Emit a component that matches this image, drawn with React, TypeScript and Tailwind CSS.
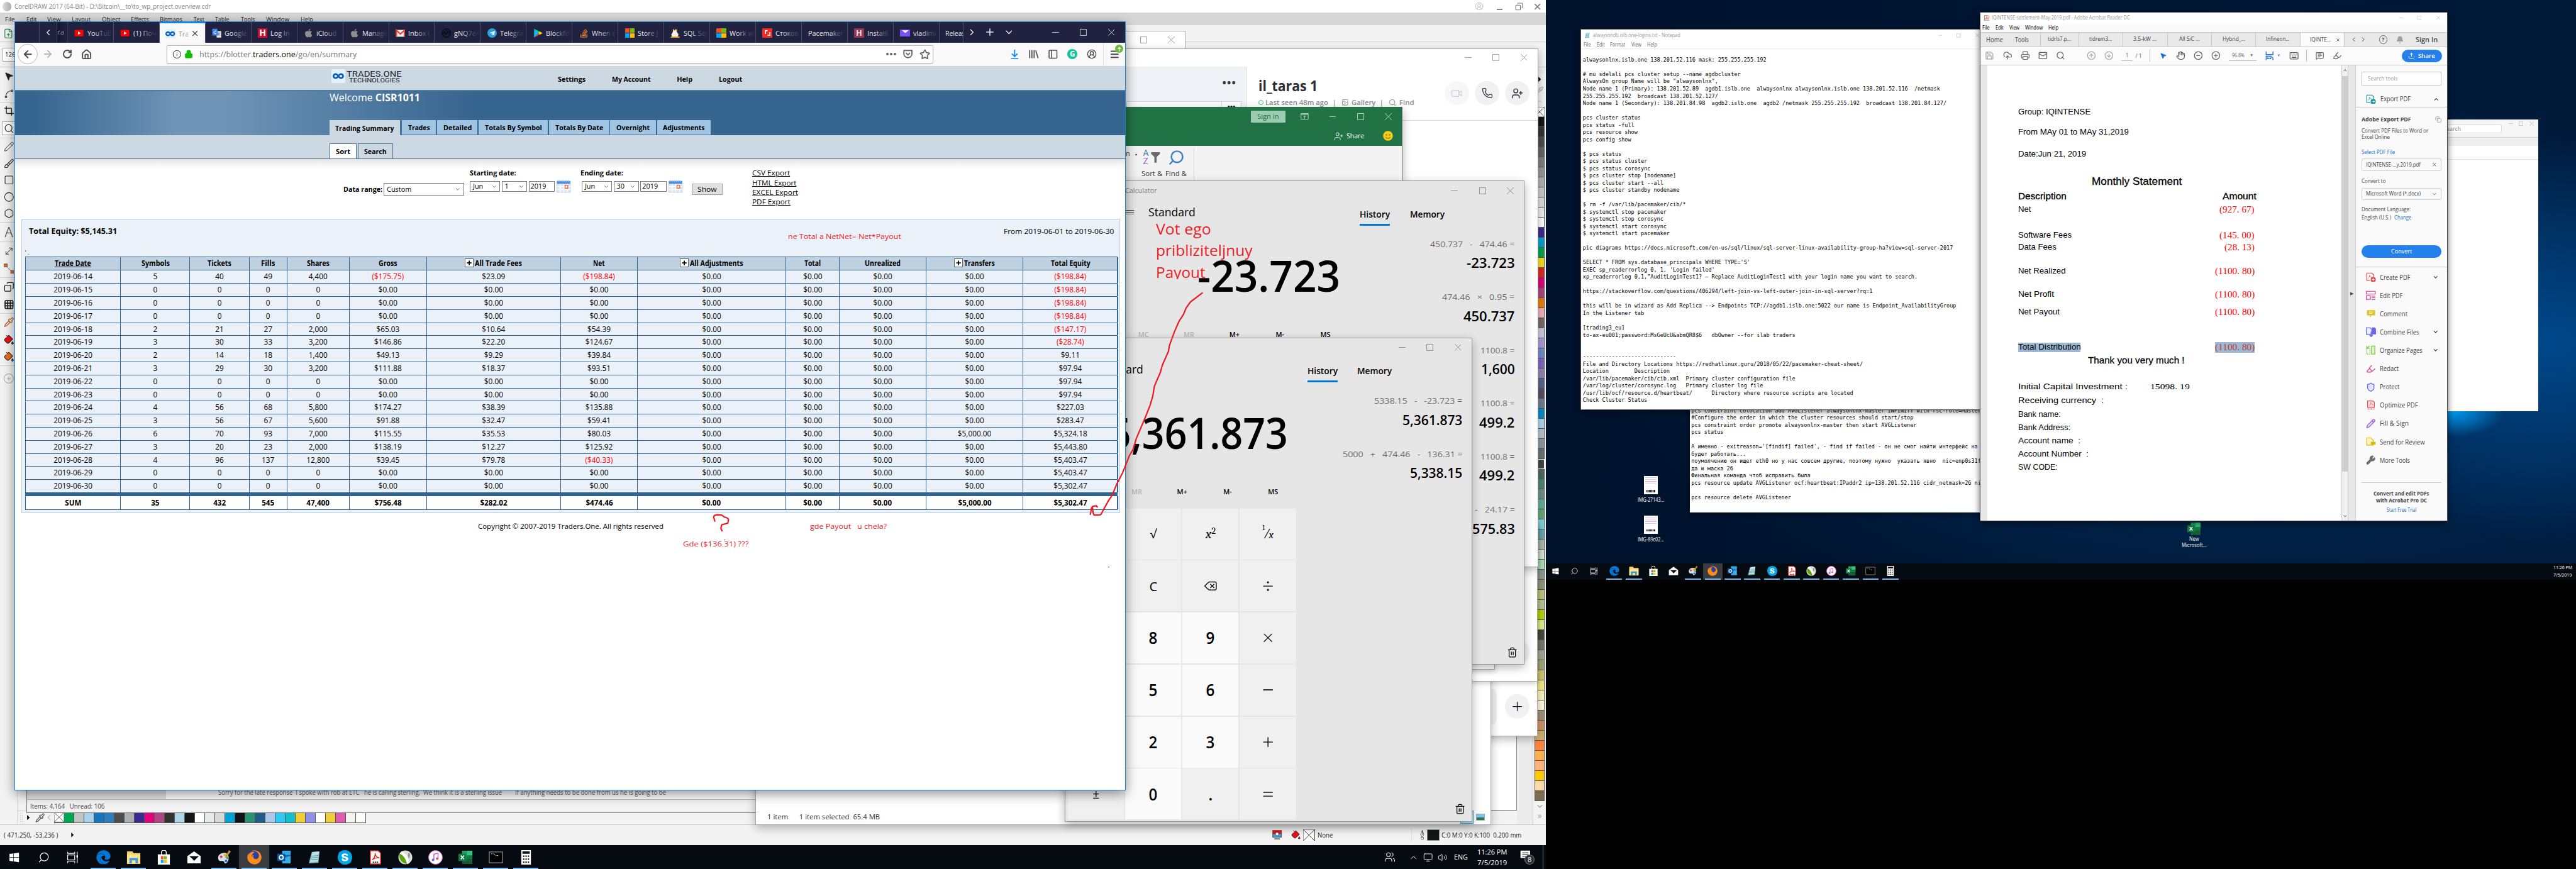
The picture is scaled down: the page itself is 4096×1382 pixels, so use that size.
import React, { useLayoutEffect, useRef } from 'react';
import {
  ArrowLeft, ArrowRight, RotateCw, House, Lock, Info, Star, Trash2, Delete, Users, Volume2, Monitor, ChevronUp, ChevronDown,
  ChevronLeft, ChevronRight, Plus, Minus, X, Equal, Divide, Menu, Printer, Mail, CloudUpload, Save, Search, CircleArrowUp,
  CircleArrowDown, Hand, MousePointer2, CircleMinus, CirclePlus, Bell, Highlighter, Keyboard, Upload, Phone, Video, UserPlus,
  Shield, Wrench, Image as ImageIcon, MessageSquareText, Spline, Crop, Brush, Pencil, Square, Circle, Hexagon, MoveDiagonal2,
  Copy, Grid3x3, Pipette, PaintBucket, FilePlus, PanelLeft, CircleUserRound,
} from 'lucide-react';
import {
  FaApple, FaWindows, FaStackOverflow, FaEdge, FaSkype, FaTelegramPlane, FaInfinity, FaFirefox, FaSmile,
} from 'react-icons/fa';

/* Single-line text stretched or condensed to the width set on its box. */
function F({ c = '', u = false, children }: { c?: string; u?: boolean; children: React.ReactNode }) {
  const outer = useRef<HTMLSpanElement>(null);
  const inner = useRef<HTMLSpanElement>(null);
  useLayoutEffect(() => {
    const o = outer.current, n = inner.current;
    if (!o || !n) return;
    n.style.transform = 'none';
    const a = o.getBoundingClientRect().width, b = n.getBoundingClientRect().width;
    if (a && b) n.style.transform = `scaleX(${a / b})`;
  });
  return (
    <span ref={outer} className={'inline-block shrink-0 whitespace-pre ' + c}>
      <span ref={inner} className={'inline-block origin-left ' + (u ? 'underline underline-offset-2' : '')}>{children}</span>
    </span>
  );
}

function Controls({ c = '', slot = 'w-[69px]', g = 'size-[17px]' }: { c?: string; slot?: string; g?: string }) {
  const s = 'flex shrink-0 items-center justify-center ' + slot;
  return (
    <div className={'flex shrink-0 items-center ' + c}>
      <span className={s}><svg viewBox="0 0 16 16" className={g}><path d="M0 8h16" stroke="currentColor" strokeWidth="1.2" /></svg></span>
      <span className={s}><svg viewBox="0 0 16 16" className={g}><path d="M.7.7h14.6v14.6H.7z" fill="none" stroke="currentColor" strokeWidth="1.2" /></svg></span>
      <span className={s}><svg viewBox="0 0 16 16" className={g}><path d="M0 0l16 16M16 0L0 16" stroke="currentColor" strokeWidth="1.2" /></svg></span>
    </div>
  );
}

/* ---------- CorelDRAW ---------- */

const MENU: [string, string][] = [
  ['File', 'w-[24px] ml-[13px]'], ['Edit', 'w-[26px] ml-[28px]'], ['View', 'w-[34px] ml-[27px]'], ['Layout', 'w-[47px] ml-[27px]'],
  ['Object', 'w-[46px] ml-[27px]'], ['Effects', 'w-[45px] ml-[26px]'], ['Bitmaps', 'w-[56px] ml-[27px]'], ['Text', 'w-[26px] ml-[28px]'],
  ['Table', 'w-[35px] ml-[28px]'], ['Tools', 'w-[35px] ml-[29px]'], ['Window', 'w-[58px] ml-[28px]'], ['Help', 'w-[31px] ml-[28px]'],
];

const COLS = [
  '#151717', '#333333', '#4d4d4d', '#666666', '#808080', '#999999', '#b3b3b3', '#cccccc', '#dedede', '#efefef', '#ffffff',
  '#3b2a91', '#00a3d9', '#00a651', '#f9e11e', '#e02b20', '#e6007e', '#ad4785', '#ef7f00', '#f7b2b9', '#7d6b67', '#cfcbea',
  '#ac9ddc', '#6f8fd0', '#8368c8', '#9488b4', '#536796', '#5a5068', '#6f7f99', '#0091cd', '#b0d9ef', '#b8c7d3', '#8e9ca5',
  '#6b767b', '#404847', '#4f6b68', '#4c8878', '#70918d', '#61b09c', '#65a977', '#7fd9e4', '#67b2be', '#b6c9b9', '#dff6e2',
  '#b4f0bd', '#929e97', '#919a7b', '#c2c97a', '#b9c896', '#b8d700', '#e7ef88', '#4a4a40', '#787a6f', '#a8a894', '#a6a678',
  '#d2c76e', '#fbe985', '#fdf3b9', '#fefadd', '#a38d77', '#d09263', '#d2b06c', '#ff823f', '#fdad4b', '#ffb27a', '#fdc800',
  '#fdd8a7', '#7d6c54',
];
const ROW = [
  '#00a651', '#c1c5c3', '#a9d3ea', '#1576bd', '#2f7dbf', '#4d4d4d', '#adaeb0', '#3b2a91', '#e3007f', '#ad4785', '#333331',
  '#afd5e8', '#151717', '#ffffff', '#e8e9e9', '#d7dad8', '#00a3d5', '#101416', '#2c9274', '#215b88', '#abc7e9', '#2fc9f2',
  '#14bfca', '#efcf38', '#9190ea', '#ffffff', '#efcf38', '#dd5eb2', '#f4f5f1', '#fcfcfa',
];

const NoFill = ({ c }: { c: string }) => (
  <svg viewBox="0 0 24 24" preserveAspectRatio="none" className={'shrink-0 bg-white ' + c}>
    <path d="M0 0h24v24H0zM0 0l24 24M24 0L0 24" fill="none" stroke="#333" strokeWidth="1.2" />
  </svg>
);

function Corel() {
  const ic = 'size-[26px]';
  const grp = 'flex w-[44px] flex-col items-center justify-around border-b border-[#cfcfcf]';
  return (
    <div className="absolute left-0 top-0 flex h-[2100px] w-[3840px] flex-col bg-[#f3f3f3] text-[#222]">
      <div className="flex h-[32px] shrink-0 items-center bg-white pl-[6px] text-[16px] text-[#858585]">
        <span className="h-[24px] w-[22px] rounded-full bg-linear-to-r from-[#ddd] to-[#aaa]" />
        <F c="ml-[8px] w-[488px]">CorelDRAW 2017 (64-Bit) - D:\Bitcoin\__to\to_wp_project.overview.cdr</F>
        <div className="ml-auto flex items-center text-[#777]">
          <CircleUserRound className="mr-[32px] size-[22px] text-[#bbb]" strokeWidth={1.5} />
          <span className="mr-[31px] mt-[14px] h-[3px] w-[15px] bg-[#888]" />
          <Copy className="mr-[24px] size-[20px] -scale-x-100" strokeWidth={2} />
          <X className="mr-[8px] size-[24px]" strokeWidth={2.5} />
        </div>
      </div>
      <div className="flex h-[30px] shrink-0 items-center bg-[#d7d7d7] pt-[2px] text-[15px]">
        {MENU.map(([t, w]) => <F key={t} c={w}>{t}</F>)}
      </div>
      <div className="flex h-[43px] shrink-0 items-center border-b border-[#cfcfcf] pl-[8px]"><FilePlus className={ic} strokeWidth={1.6} color="#168a3a" /></div>
      <div className="flex h-[63px] shrink-0 items-center border-b border-[#cfcfcf] pl-[6px]">
        <span className="flex h-[34px] w-[80px] items-center border border-[#aaa] bg-white pl-[5px] text-[15px]">126</span>
      </div>
      <div className="flex min-h-0 flex-1">
        <div className="flex w-[44px] shrink-0 flex-col border-r border-[#d5d5d5]">
          <div className={grp + ' h-[88px]'}><MousePointer2 className={ic} fill="#222" strokeWidth={1} /><Spline className={ic} strokeWidth={1.5} /></div>
          <div className={grp + ' h-[88px]'}><Crop className={ic} /><span className="flex h-[34px] w-[34px] items-center justify-center border border-[#aaa] bg-white"><Search className={ic} strokeWidth={1.6} /></span></div>
          <div className={grp + ' h-[209px]'}><Pencil className={ic} strokeWidth={1.3} /><Brush className={ic} strokeWidth={1.5} /><Square className={ic} strokeWidth={1.5} /><Circle className={ic} strokeWidth={1.5} /><Hexagon className={ic} strokeWidth={1.5} /></div>
          <div className={grp + ' h-[49px] text-[34px] font-light'}>A</div>
          <div className={grp + ' h-[89px]'}><MoveDiagonal2 className={ic + ' -scale-x-100'} strokeWidth={1.4} /><svg viewBox="0 0 24 24" className={ic}><path d="M4 4l16 16" stroke="#333" /><path d="M1 1h7v7H1zM16 16h7v7h-7z" fill="#ee6c1a" stroke="#333" /></svg></div>
          <div className={grp + ' h-[89px]'}><Copy className={ic + ' -scale-x-100'} strokeWidth={1.8} /><Grid3x3 className={ic} strokeWidth={2.5} /></div>
          <div className={grp + ' h-[129px]'}><Pipette className={ic} color="#c2571a" strokeWidth={1.8} /><PaintBucket className={ic} fill="#e11" strokeWidth={1.5} /><PaintBucket className={ic} fill="#ee6c1a" strokeWidth={1.5} /></div>
          <div className="flex h-[64px] items-center justify-center text-[#aaa]"><CirclePlus className="size-[28px]" strokeWidth={1.4} /></div>
        </div>
        <div className="flex flex-1 flex-col">
          <div className="ml-[30px] flex-1 border-r border-b border-[#888] bg-white" />
          <div className="flex h-[34px] shrink-0 items-center border-t border-[#cfcfcf] pl-[4px] text-black">
            <svg viewBox="0 0 10 24" className="h-[24px] w-[10px]"><path d="M2 0v24M7 0v24" stroke="#999" strokeDasharray="2 3" /></svg>
            <svg viewBox="0 0 8 16" className="ml-[10px] h-[13px] w-[7px]"><path d="M0 0l8 8-8 8z" /></svg>
            <Pipette className="ml-[12px] size-[24px]" strokeWidth={2} color="#555" />
            <ChevronLeft className="size-[22px] text-[#bbb]" />
            <span className="ml-[2px] flex border-b-2 border-[#555]">
              <NoFill c="h-[24px] w-[25px]" />
              {ROW.map((k, i) => <span key={i} className="h-[24px] w-[25px] border-r border-[#555]" style={{ backgroundColor: k }} />)}
            </span>
          </div>
        </div>
        <div className="w-[42px] shrink-0 border-r border-[#ccc] bg-[#ebebeb]" />
        <div className="flex w-[30px] shrink-0 flex-col items-center bg-[#f3f3f3]">
          <div className="flex h-[97px] flex-col items-center justify-around text-[#aaa]">
            <svg viewBox="0 0 24 8" className="h-[8px] w-[24px]"><path d="M4 1h20M2 6h20" stroke="#999" strokeDasharray="2 4" /></svg>
            <svg viewBox="0 0 8 16" className="h-[13px] w-[7px]"><path d="M0 0l8 8-8 8z" /></svg>
            <Pipette className="size-[20px]" /><ChevronUp className="size-[16px]" />
          </div>
          <NoFill c="h-[25px] w-[25px]" />
          {COLS.map((k, i) => (
            <span key={i} className={'h-[25px] w-[25px] shrink-0 border-b ' + (i === 34 ? 'border-2 border-white' : 'border-x border-[#555]')} style={{ backgroundColor: k }} />
          ))}
          <ChevronDown className="mt-[4px] size-[20px] text-[#aaa]" strokeWidth={3} />
          <span className="mt-[2px] text-[22px] text-[#aaa]">»</span>
        </div>
      </div>
      <div className="flex h-[52px] shrink-0 items-center border-t border-[#ccc] text-[16px]">
        <F c="ml-[9px] w-[135px]">( 471.250, -53.236 )</F>
        <svg viewBox="0 0 8 16" className="ml-[33px] h-[12px] w-[7px]"><path d="M0 0l8 8-8 8z" /></svg>
        <svg viewBox="0 0 24 24" className="ml-auto size-[24px]"><path d="M1 1h22v17H1z" fill="#e11" stroke="#333" /><path d="M2 10h20v7H2z" fill="#1ab0ee" /><circle cx="12" cy="10" r="4" fill="#fff" stroke="#333" /><path d="M5 22h14" stroke="#333" strokeWidth="2" /></svg>
        <PaintBucket className="ml-[23px] size-[24px]" fill="#e11" strokeWidth={1.5} />
        <NoFill c="ml-[6px] size-[29px]" />
        <F c="ml-[7px] w-[38px]">None</F>
        <span className="ml-[194px] h-[34px] w-px bg-[#ddd]" />
        <svg viewBox="0 0 12 24" className="ml-[20px] h-[24px] w-[14px]"><path d="M6 1l4 10-3 6H5l-3-6zM6 1v11M3 18h6v5H3z" fill="none" stroke="#222" /></svg>
        <span className="ml-[5px] h-[29px] w-[30px] border border-[#888] bg-[#151717]" />
        <F c="ml-[6px] mr-[59px] w-[199px]">C:0 M:0 Y:0 K:100  0.200 mm</F>
      </div>
    </div>
  );
}

/* ---------- Calculator ---------- */

type Entry = [string, string, string, string];
const key = 'flex items-center justify-center bg-[#f0f0f0]';
const num = 'flex items-center justify-center bg-[#fafafa] text-[41px] font-semibold';
const Digit = ({ d }: { d: string }) => <span className={num}><span className="scale-x-92">{d}</span></span>;

function Calculator({ pos, value, valueW, entries, keypad }: { pos: string; value: string; valueW: string; entries: Entry[]; keypad: boolean }) {
  const op = 'size-[38px]';
  return (
    <div className={'absolute flex h-[1203px] w-[1012px] flex-col border border-[#9a9a9a] bg-[#e6e6e6] text-black shadow-[0_8px_22px_rgba(0,0,0,0.3)] ' + pos}>
      <div className="flex h-[46px] shrink-0 items-center pl-[17px] text-[18px] text-[#7a7a7a]">
        <F c="w-[79px]">Calculator</F>
        <Controls c="ml-auto" />
      </div>
      <div className="flex min-h-0 flex-1">
        <div className="flex w-[572px] shrink-0 flex-col">
          <div className="flex h-[64px] shrink-0 items-center pb-[2px] pl-[20px]">
            <svg viewBox="0 0 20 12" className="h-[12px] w-[21px]"><path d="M0 1h20M0 6h20M0 11h20" stroke="#000" strokeWidth="1.3" /></svg>
            <F c="ml-[35px] w-[117px] text-[27px]">Standard</F>
          </div>
          <div className="flex h-[255px] shrink-0 items-center justify-end pb-[6px] pr-[20px] text-[107px] font-semibold">
            <F c={valueW}>{value}</F>
          </div>
          <div className="flex h-[34px] shrink-0 items-center pl-[7px] text-[17px] font-semibold">
            {['MC', 'MR', 'M+', 'M-', 'MS'].map((m, i) => (
              <span key={m} className={'w-[113px] text-center ' + (i < 2 ? 'text-[#b5b5b5]' : '')}>{m}</span>
            ))}
          </div>
          {keypad && (
            <div className="ml-[6px] mt-[24px] grid h-[773px] w-[566px] grid-cols-4 grid-rows-6 gap-[3px] text-[30px]">
              <span className={key} />
              <span className={key}>√</span>
              <span className={key + ' font-serif text-[34px] italic'}><span>x<sup className="text-[22px] not-italic">2</sup></span></span>
              <span className={key + ' font-serif italic'}><span className="flex items-center"><sup className="mb-[10px] text-[18px] not-italic">1</sup><span className="-ml-[2px]">/</span><span className="-ml-[2px] mt-[8px] text-[26px]">x</span></span></span>
              <span className={key} />
              <span className={key + ' text-[32px]'}>C</span>
              <span className={key}><Delete className="size-[34px]" strokeWidth={1.5} /></span>
              <span className={key}><Divide className={op} strokeWidth={1.2} /></span>
              <span className={num} /><Digit d="8" /><Digit d="9" /><span className={key}><X className={op} strokeWidth={1.2} /></span>
              <span className={num} /><Digit d="5" /><Digit d="6" /><span className={key}><Minus className={op} strokeWidth={1.6} /></span>
              <span className={num} /><Digit d="2" /><Digit d="3" /><span className={key}><Plus className={op} strokeWidth={1.4} /></span>
              <span className={key}>±</span><Digit d="0" /><span className={key + ' text-[41px] font-semibold'}>.</span><span className={key}><Equal className={op} strokeWidth={1.2} /></span>
            </div>
          )}
        </div>
        <div className="flex flex-1 flex-col">
          <div className="flex h-[64px] shrink-0 items-end pl-[29px] text-[22px] font-semibold">
            <span className="flex h-[40px] flex-col justify-between border-b-[5px] border-[#0078d7]"><F c="mt-px w-[75px]">History</F></span>
            <span className="ml-[49px] h-[40px]"><F c="mt-px w-[86px]">Memory</F></span>
          </div>
          <div className="mt-[33px] flex flex-1 flex-col items-end pr-[23px]">
            {entries.map(([a, aw, b, bw], i) => (
              <div key={i} className="flex h-[132px] flex-col items-end">
                <span className="flex h-[26px] items-center text-[20px] text-[#6e6e6e]"><F c={aw}>{a}</F></span>
                <span className="mt-[12px] flex h-[44px] items-center text-[34px] font-semibold"><F c={bw}>{b}</F></span>
              </div>
            ))}
          </div>
          <Trash2 className="mb-[16px] ml-auto mr-[16px] size-[27px]" strokeWidth={1.8} />
        </div>
      </div>
    </div>
  );
}

/* ---------- Skype and Excel ---------- */

function Skype() {
  return (
    <div className="absolute left-[2600px] top-[120px] flex h-[1289px] w-[1222px] flex-col border border-[#aaa] bg-white shadow-[0_8px_22px_rgba(0,0,0,0.3)]">
      <div className="flex h-[44px] shrink-0 justify-end text-[#888]"><Controls /></div>
      <div className="flex h-[135px] shrink-0 border-b border-[#d5d5d5]">
        <div className="flex w-[496px] shrink-0 flex-col items-end border-r-2 border-[#d4d6da] bg-[#eff3f8]">
          <span className="mr-[24px] mt-[27px] text-[26px] font-bold tracking-[2px] text-[#333]">•••</span>
          <span className="mr-[12px] mt-[33px] flex h-[40px] w-[285px] justify-end border border-[#d0d3d8] bg-white">
            <span className="w-[48px] border-l border-[#d0d3d8] pt-[4px] text-center text-[18px] font-bold">•••</span>
          </span>
        </div>
        <div className="flex flex-col pl-[29px]">
          <F c="mt-[31px] w-[147px] text-[35px] font-bold text-[#2b2c33]">il_taras 1</F>
          <div className="mt-[14px] flex items-center text-[17px] font-semibold text-[#8a8d91]">
            <span className="size-[12px] rounded-full border-[3px] border-[#2ecc5a]" />
            <F c="ml-[6px] w-[156px]">Last seen 48m ago</F>
            <span className="ml-[10px]">|</span>
            <ImageIcon className="ml-[13px] size-[18px]" />
            <F c="ml-[7px] w-[60px]">Gallery</F>
            <span className="ml-[10px]">|</span>
            <Search className="ml-[13px] size-[19px]" />
            <F c="ml-[8px] w-[37px]">Find</F>
          </div>
        </div>
        <div className="ml-auto mr-[21px] mt-[36px] flex gap-[15px] text-[#2b2c33]">
          <span className="flex size-[60px] items-center justify-center rounded-full bg-[#f7f7f9] text-[#ccc]"><Video className="size-[30px]" strokeWidth={1.6} /></span>
          <span className="flex size-[60px] items-center justify-center rounded-full bg-[#f1f1f3]"><Phone className="size-[28px]" strokeWidth={1.6} /></span>
          <span className="flex size-[60px] items-center justify-center rounded-full bg-[#f1f1f3]"><UserPlus className="size-[30px]" strokeWidth={1.8} /></span>
        </div>
      </div>
    </div>
  );
}

function Excel() {
  return (
    <div className="absolute left-[2600px] top-[266px] flex h-[600px] w-[884px] flex-col border-r border-[#777] bg-[#f3f3f3] shadow-[0_8px_22px_rgba(0,0,0,0.3)]">
      <div className="flex h-[96px] shrink-0 flex-col bg-[#217346] text-[#d5e8dc]">
        <div className="flex h-[48px] items-center justify-end">
          <span className="mr-[38px] flex h-[30px] w-[86px] items-center justify-center rounded-[2px] bg-[#9bccb1] text-[17px] text-[#217346]"><F c="w-[54px]">Sign in</F></span>
          <svg viewBox="0 0 20 16" className="mr-[2px] h-[16px] w-[20px]"><path d="M1 1h18v14H1zM1 4h18M10 14V6M7 9l3-3 3 3" fill="none" stroke="currentColor" strokeWidth="1.3" /></svg>
          <Controls c="-mr-px ml-[23px]" />
        </div>
        <div className="flex h-[48px] items-center justify-end pb-[2px] pt-[2px] text-[17px] text-white">
          <UserPlus className="size-[24px]" strokeWidth={1.3} />
          <F c="ml-[8px] w-[44px]">Share</F>
          <FaSmile className="ml-[46px] mr-[22px] size-[25px] text-[#ffc90e]" />
        </div>
      </div>
      <div className="ml-[197px] flex h-[86px] items-start text-[17px] text-[#333]">
        <span className="mt-[12px] w-[39px]">n <span className="ml-[8px] text-[10px]">▾</span></span>
        <div className="flex w-[52px] flex-col items-center">
          <div className="flex h-[52px] w-full items-center pt-[6px]">
            <div className="ml-[4px] flex flex-col text-[22px] leading-[20px]"><span className="text-[#3f7fc1]">A</span><span className="text-[#9b5fb5]">Z</span></div>
            <svg viewBox="0 0 24 28" className="ml-[6px] h-[26px] w-[23px]"><path d="M0 0h24v4l-9 9v15H9V13L0 4z" fill="#6b6b6b" /></svg>
          </div>
          <F c="mt-[10px] w-[52px]">Sort &</F>
        </div>
        <div className="ml-[8px] flex w-[53px] flex-col items-center">
          <span className="flex h-[52px] items-center pt-[8px]"><Search className="size-[42px] -scale-x-100 text-[#3f7fc1]" strokeWidth={2.2} /></span>
          <F c="mt-[10px] w-[53px]">Find &</F>
        </div>
        <span className="ml-[16px] mt-[5px] h-full w-px bg-[#ccc]" />
      </div>
    </div>
  );
}

/* ---------- Firefox ---------- */

const fav = 'size-[24px] shrink-0';
const WinLogo = () => (
  <span className="grid size-[24px] shrink-0 grid-cols-2 gap-[1px]"><i className="bg-[#f25022]" /><i className="bg-[#7fba00]" /><i className="bg-[#00a4ef]" /><i className="bg-[#ffb900]" /></span>
);
const Play = () => (
  <svg viewBox="0 0 24 24" className={fav}><path d="M4 4h16q3 0 3 3v10q0 3-3 3H4q-3 0-3-3V7q0-3 3-3z" fill="#f00" /><path d="M9.500 8l7 4-7 4z" fill="#fff" /></svg>
);
const TABS: [React.ReactNode, string][] = [
  [<Play />, 'YouTube'],
  [<Play />, '(1) Поче'],
  [<FaInfinity className={fav + ' bg-[#dff3fc] text-[#0b63c5]'} />, 'Tra'],
  [<svg viewBox="0 0 24 24" className={fav}><path d="M10 7h13v16H12z" fill="#e8e8e8" /><path d="M14 12h7M17.500 10v2M20 12q-2 5-5 6M15.500 13q2 4 5 5" stroke="#666" fill="none" /><path d="M1 1h12l4 17H1z" fill="#4285f4" /><path d="M11 8.500a3.300 3.300 0 1 0 0 3.500H8" stroke="#fff" strokeWidth="1.500" fill="none" /></svg>, 'Google'],
  [<span className="flex size-[24px] shrink-0 items-center justify-center bg-[#c8102e] text-[22px] font-bold text-white">H</span>, 'Log In'],
  [<FaApple className={fav + ' text-[#8f8f93]'} />, 'iCloud'],
  [<FaApple className={fav + ' text-[#8f8f93]'} />, 'Manage'],
  [<svg viewBox="0 0 24 24" className={fav}><path d="M1 4h22v17H1z" fill="#eee" /><path d="M2 21V5l10 9L22 5v16" fill="none" stroke="#e0402f" strokeWidth="3.4" /></svg>, 'Inbox ('],
  [<svg viewBox="0 0 24 24" className={fav}><circle cx="12" cy="12" r="10.500" fill="#191b33" stroke="#0a0b16" strokeWidth="2" /><path d="M3 14l5-5 3 6 5-7 5 3" fill="none" stroke="#0a0b16" strokeWidth="2" /></svg>, 'gNQ7e4'],
  [<span className="flex size-[24px] shrink-0 items-center justify-center rounded-full bg-[#2aa1e0]"><FaTelegramPlane className="size-[15px] text-white" /></span>, 'Telegra'],
  [<svg viewBox="0 0 24 24" className={fav}><path d="M2 1l11 11L2 23z" fill="#00c3ff" /><path d="M2 1l15 8-4 3z" fill="#00e57a" /><path d="M2 23l15-8-4-3z" fill="#ff3a44" /><path d="M16 8l7 4-7 4-3-4z" fill="#ffd500" /></svg>, 'Blockfo'],
  [<FaStackOverflow className={fav + ' text-[#f48024]'} />, 'When c'],
  [<WinLogo />, 'Store J'],
  [<svg viewBox="0 0 24 24" className={fav}><path d="M6 9l1-8 4 5 3-5 2 8 4 6-2 8H5l-3-7z" fill="#f4f0e6" /><path d="M8 3l2 3M15 3l1 4" stroke="#f59a1a" strokeWidth="2" /><path d="M1 22h22" stroke="#f59a1a" strokeWidth="3" /></svg>, 'SQL Ser'],
  [<WinLogo />, 'Work wi'],
  [<span className="flex size-[24px] shrink-0 items-center justify-center bg-[#ee2b24]"><svg viewBox="0 0 12 12" className="size-[14px]"><path d="M1 8V1h5M11 4v7H6" fill="none" stroke="#fff" strokeWidth="2.4" /></svg></span>, 'Стоков'],
  [null, 'Pacemaker'],
  [<span className="flex size-[24px] shrink-0 items-center justify-center bg-[#8d3a52] text-[20px] font-bold text-[#f7d9df]">H</span>, 'Installi'],
  [<span className="flex h-[16px] w-[24px] shrink-0 justify-center bg-[#7a52f4]"><svg viewBox="0 0 24 16" className="h-[14px] w-[20px]"><path d="M2 2h20l-10 8z" fill="#fff" /></svg></span>, 'vladimi'],
];

function TabStrip() {
  return (
    <div className="flex h-[51px] shrink-0 bg-[#20223f] text-[18px] text-[#e8e8ee]">
      <span className="w-[61px] border-r border-[#4a4c66]" />
      <span className="flex w-[42px] items-center justify-center"><ChevronLeft className="size-[24px]" strokeWidth={2} /></span>
      <span className="flex w-[28px] items-center overflow-hidden border-x border-[#3a3c58] bg-linear-to-r from-[#16182e] to-[#20223f] text-[#8a8b9c]">ra</span>
      {TABS.map(([icon, t], i) => (
        <div key={i} className={'relative flex w-[114px] shrink-0 items-center overflow-hidden border-r border-[#4a4c66] pt-[4px] ' + (i === 2 ? 'border-t-[4px] border-t-[#0a84ff] bg-[#f9f9fa] pl-[15px] pt-0 text-[#222]' : 'pl-[16px]')}>
          {icon}
          <span className={'origin-left scale-x-94 whitespace-nowrap ' + (icon ? 'ml-[8px] ' : '') + (i === 2 ? 'w-[25px] overflow-hidden text-[#999]' : '')}>{t}</span>
          {i === 2 ? <X className="ml-[5px] size-[22px]" strokeWidth={1.8} /> : <span className="absolute right-0 top-0 h-full w-[46px] bg-linear-to-r from-transparent via-[#20223f]/70 to-[#20223f]" />}
        </div>
      ))}
      <span className="flex w-[60px] items-center overflow-hidden border-r border-[#4a4c66] pl-[14px] pt-[4px]"><span className="origin-left scale-x-90">Releas</span></span>
      <span className="flex w-[40px] items-center justify-center"><ChevronRight className="size-[26px]" /></span>
      <span className="flex w-[50px] items-center justify-center"><Plus className="size-[28px]" /></span>
      <span className="flex w-[46px] items-center justify-center"><ChevronDown className="size-[26px]" /></span>
      <Controls c="ml-auto text-[#eee]" />
    </div>
  );
}

function UrlBar() {
  const s = 'flex w-[48px] shrink-0 items-center justify-center';
  return (
    <div className="flex h-[60px] shrink-0 items-center border-b border-[#d0d0d4] bg-[#f9f9fa] pl-[6px] text-[#4a4a4f]">
      <span className="flex size-[50px] items-center justify-center rounded-full border border-[#b9b9bd] bg-white"><ArrowLeft className="size-[29px]" strokeWidth={2.6} /></span>
      <span className="flex w-[50px] justify-center text-[#b5b5b8]"><ArrowRight className="size-[28px]" strokeWidth={2.4} /></span>
      <span className={s}><RotateCw className="size-[25px]" strokeWidth={2.8} /></span>
      <span className={s}><House className="size-[27px]" strokeWidth={2.6} /></span>
      <div className="ml-[174px] flex h-[45px] w-[1906px] items-center rounded-[3px] border border-[#b5b5b9] bg-white pl-[13px] text-[21px] shadow-sm">
        <Info className="size-[23px]" strokeWidth={1.8} />
        <Lock className="ml-[7px] size-[22px] text-[#12bc00]" fill="#12bc00" />
        <F c="ml-[15px] w-[391px] text-[#7a7a7e]">https://blotter.<span className="text-black">traders.one</span>/go/en/summary</F>
        <span className="ml-auto flex gap-[3px]"><i className="size-[6px] rounded-full bg-[#666]" /><i className="size-[6px] rounded-full bg-[#666]" /><i className="size-[6px] rounded-full bg-[#666]" /></span>
        <svg viewBox="0 0 24 22" className="ml-[18px] h-[22px] w-[24px]"><path d="M2 2h20v8a10 10 0 0 1-20 0zM7 8l5 5 5-5" fill="none" stroke="#666" strokeWidth="3" strokeLinejoin="round" /></svg>
        <Star className="ml-[16px] mr-[7px] size-[27px] text-[#666]" strokeWidth={2.4} />
      </div>
      <span className={s + ' ml-[177px]'}><svg viewBox="0 0 20 24" className="h-[24px] w-[20px]"><path d="M10 0v17M3 10l7 7 7-7M1 22.500h18" fill="none" stroke="#0a84ff" strokeWidth="2.800" /></svg></span>
      <span className={s}><svg viewBox="0 0 24 22" className="h-[22px] w-[24px]"><path d="M2 1v20M7.500 1v20M13 1v20M17 2l6 19" fill="none" stroke="#4a4a4f" strokeWidth="2.600" /></svg></span>
      <span className={s}><PanelLeft className="size-[26px]" strokeWidth={2.2} /></span>
      <span className={s}><span className="flex size-[25px] items-center justify-center rounded-full bg-[#15c39a] text-[18px] font-bold text-white">G</span></span>
      <span className={s}><CircleUserRound className="size-[25px]" strokeWidth={2} /></span>
      <span className="relative ml-[4px] flex h-full flex-1 items-center justify-center border-l border-[#ddd]">
        <Menu className="size-[26px]" strokeWidth={2.8} />
        <span className="absolute left-[29px] top-[6px] flex size-[20px] items-center justify-center rounded-full bg-[#69b83a] text-white"><svg viewBox="0 0 12 12" className="size-[12px]"><path d="M6 12V2M2 6l4-4 4 4" fill="none" stroke="currentColor" strokeWidth="2" /></svg></span>
      </span>
    </div>
  );
}

const Z = '$0.00';
const ROWS: string[][] = [
  ['2019-06-14', '5', '40', '49', '4,400', '($175.75)', '$23.09', '($198.84)', Z, Z, Z, Z, '($198.84)'],
  ['2019-06-15', '0', '0', '0', '0', Z, Z, Z, Z, Z, Z, Z, '($198.84)'],
  ['2019-06-16', '0', '0', '0', '0', Z, Z, Z, Z, Z, Z, Z, '($198.84)'],
  ['2019-06-17', '0', '0', '0', '0', Z, Z, Z, Z, Z, Z, Z, '($198.84)'],
  ['2019-06-18', '2', '21', '27', '2,000', '$65.03', '$10.64', '$54.39', Z, Z, Z, Z, '($147.17)'],
  ['2019-06-19', '3', '30', '33', '3,200', '$146.86', '$22.20', '$124.67', Z, Z, Z, Z, '($28.74)'],
  ['2019-06-20', '2', '14', '18', '1,400', '$49.13', '$9.29', '$39.84', Z, Z, Z, Z, '$9.11'],
  ['2019-06-21', '3', '29', '30', '3,200', '$111.88', '$18.37', '$93.51', Z, Z, Z, Z, '$97.94'],
  ['2019-06-22', '0', '0', '0', '0', Z, Z, Z, Z, Z, Z, Z, '$97.94'],
  ['2019-06-23', '0', '0', '0', '0', Z, Z, Z, Z, Z, Z, Z, '$97.94'],
  ['2019-06-24', '4', '56', '68', '5,800', '$174.27', '$38.39', '$135.88', Z, Z, Z, Z, '$227.03'],
  ['2019-06-25', '3', '56', '67', '5,600', '$91.88', '$32.47', '$59.41', Z, Z, Z, Z, '$283.47'],
  ['2019-06-26', '6', '70', '93', '7,000', '$115.55', '$35.53', '$80.03', Z, Z, Z, '$5,000.00', '$5,324.18'],
  ['2019-06-27', '3', '20', '23', '2,000', '$138.19', '$12.27', '$125.92', Z, Z, Z, Z, '$5,443.80'],
  ['2019-06-28', '4', '96', '137', '12,800', '$39.45', '$79.78', '($40.33)', Z, Z, Z, Z, '$5,403.47'],
  ['2019-06-29', '0', '0', '0', '0', Z, Z, Z, Z, Z, Z, Z, '$5,403.47'],
  ['2019-06-30', '0', '0', '0', '0', Z, Z, Z, Z, Z, Z, Z, '$5,302.47'],
];
const SUM = ['SUM', '35', '432', '545', '47,400', '$756.48', '$282.02', '$474.46', Z, Z, Z, '$5,000.00', '$5,302.47'];
const HEAD: [string, string][] = [
  ['Trade Date', 'w-[90px]'], ['Symbols', 'w-[70px]'], ['Tickets', 'w-[59px]'], ['Fills', 'w-[35px]'], ['Shares', 'w-[56px]'],
  ['Gross', 'w-[46px]'], ['+All Trade Fees', 'w-[117px]'], ['Net', 'w-[29px]'], ['+All Adjustments', 'w-[132px]'], ['Total', 'w-[41px]'],
  ['Unrealized', 'w-[89px]'], ['+Transfers', 'w-[76px]'], ['Total Equity', 'w-[98px]'],
];
const GRID = 'grid grid-cols-[237px_172px_147px_94px_155px_192px_333px_191px_369px_133px_215px_241px_235px]';

function Cal() {
  return (
    <svg viewBox="0 0 36 32" className="h-[32px] w-[36px] shrink-0">
      <path d="M1 3h33v28H1z" fill="#dde9f5" stroke="#9db8d3" /><path d="M1 3h33v7H1z" fill="#4d8fe0" />
      <path d="M4 0v5M9 0v5M14 0v5M19 0v5M24 0v5M29 0v5" stroke="#bcd" strokeWidth="2" />
      <path d="M1 17h33M1 24h33M9 10v21M18 10v21M27 10v21" stroke="#fff" strokeWidth="2" />
      <path d="M21 14h7v7h-7z" fill="#fff" stroke="#ef5a2a" strokeWidth="2" />
    </svg>
  );
}
const Sel = ({ w, children }: { w: string; children: string }) => (
  <span className={'flex shrink-0 items-center justify-between border border-[#7a7a7a] bg-white px-[6px] text-[17px] ' + w}>
    {children}<ChevronDown className="size-[15px]" strokeWidth={1.5} />
  </span>
);

function Page() {
  const tab = 'flex items-center justify-center border-b-2 border-[#4c7190] bg-[#9fc5e2] mr-[3px] pt-[2px]';
  return (
    <div className="flex flex-1 flex-col bg-white text-[17px] text-black">
      <div className="flex h-[58px] shrink-0 bg-[#cdd9e2] pl-[786px]">
        <span className="mt-[7px] flex h-[34px] w-[34px] items-center justify-center rounded-[4px] bg-[#e3f3fc]"><FaInfinity className="size-[28px] text-[#0b5fc0]" /></span>
        <span className="ml-[3px] mt-[9px] flex w-[137px] flex-col font-['Roboto']">
          <F c="w-[137px] text-[19px] text-[#20222c]">TRADES.ONE</F>
          <F c="ml-[6px] w-[126px] text-[14px] text-[#20222c]">TECHNOLOGIES</F>
        </span>
        <div className="ml-[389px] mt-[24px] flex font-bold">
          <F c="w-[69px]">Settings</F><F c="ml-[65px] w-[96px]">My Account</F><F c="ml-[65px] w-[39px]">Help</F><F c="ml-[65px] w-[58px]">Logout</F>
        </div>
      </div>
      <div className="h-[3px] shrink-0 bg-[#567c9c]" />
      <div className="flex h-[110px] shrink-0 flex-col justify-between bg-[linear-gradient(90deg,#35648e_40px,#6f94b6_400px,#6f94b6_520px,#35648e_1150px)] pl-[781px]">
        <F c="mt-[4px] w-[225px] text-[26px] text-white">Welcome <b>CISR1011</b></F>
        <div className="flex h-[38px] font-bold">
          <span className="mr-[4px] flex w-[176px] items-center justify-center bg-[#cdd9e2] pt-[3px]"><F c="w-[146px]">Trading Summary</F></span>
          <span className={tab + ' w-[85px]'}><F c="w-[54px]">Trades</F></span>
          <span className={tab + ' w-[100px]'}><F c="w-[71px]">Detailed</F></span>
          <span className={tab + ' w-[172px]'}><F c="w-[142px]">Totals By Symbol</F></span>
          <span className={tab + ' w-[149px]'}><F c="w-[119px]">Totals By Date</F></span>
          <span className={tab + ' w-[113px]'}><F c="w-[83px]">Overnight</F></span>
          <span className={tab + ' w-[134px]'}><F c="w-[104px]">Adjustments</F></span>
        </div>
      </div>
      <div className="flex h-[59px] shrink-0 items-end border-b-2 border-[#4c7190] bg-[#cdd9e2] pl-[781px] font-bold">
        <span className="flex h-[37px] w-[67px] items-center justify-center border border-b-0 border-[#4c7190] bg-white pt-[2px]"><F c="w-[36px]">Sort</F></span>
        <span className="ml-[3px] flex h-[37px] w-[88px] items-center justify-center border border-b-0 border-[#4c7190] pt-[2px]"><F c="w-[56px]">Search</F></span>
      </div>
      <div className="flex h-[149px] shrink-0 bg-linear-to-b from-[#e6e6e6] to-white to-[24px]">
        <div className="ml-[815px] mt-[60px] flex h-[30px] items-center"><F c="w-[97px] font-bold">Data range:</F><span className="ml-[4px] flex h-[30px]"><Sel w="w-[199px]">Custom</Sel></span></div>
        <div className="ml-[15px] mt-[27px] flex flex-col">
          <F c="w-[115px] font-bold">Starting date:</F>
          <div className="mt-[8px] flex h-[32px] items-center gap-[4px]">
            <span className="flex h-[26px]"><Sel w="w-[75px]">Jun</Sel></span><span className="flex h-[26px]"><Sel w="w-[63px]">1</Sel></span>
            <span className="flex h-[27px] w-[65px] items-center border border-[#7a7a7a] pl-[3px]">2019</span><Cal />
          </div>
        </div>
        <div className="ml-[24px] mt-[27px] flex flex-col">
          <F c="w-[106px] font-bold">Ending date:</F>
          <div className="ml-[3px] mt-[8px] flex h-[32px] items-center gap-[4px]">
            <span className="flex h-[26px]"><Sel w="w-[75px]">Jun</Sel></span><span className="flex h-[26px]"><Sel w="w-[63px]">30</Sel></span>
            <span className="flex h-[27px] w-[65px] items-center border border-[#7a7a7a] pl-[3px]">2019</span><Cal />
          </div>
        </div>
        <span className="ml-[23px] mt-[61px] flex h-[28px] w-[76px] items-center justify-center border border-[#a0a0a0] bg-[#e1e1e1]"><F c="w-[48px]">Show</F></span>
        <div className="ml-[73px] mt-[22px] flex flex-col leading-[24px]">
          <F u c="w-[94px]">CSV Export</F><F u c="w-[110px]">HTML Export</F><F u c="w-[114px]">EXCEL Export</F><F u c="w-[95px]">PDF Export</F>
        </div>
      </div>
      <div className="ml-[15px] mt-[-1px] flex h-[731px] w-[2731px] shrink-0 flex-col border border-[#bccddd] bg-[#eaf1f9]">
        <div className="flex h-[77px] shrink-0 text-[18px]">
          <F c="ml-[17px] mt-[21px] w-[219px] font-bold">Total Equity: $5,145.31</F>
          <F c="ml-[1668px] mt-[33px] w-[281px] text-[#ed1c24]">ne Total a NetNet= Net*Payout</F>
          <F c="ml-[255px] mt-[21px] w-[274px]">From 2019-06-01 to 2019-06-30</F>
        </div>
        <span className="ml-[8px] h-[16px] text-[14px] leading-[12px]">' .</span>
        <div className="ml-[8px] w-[2715px] border-2 border-r border-[#2f6390] text-[18.5px]">
          <div className={GRID + ' h-[33px] bg-[#bfd0e0] font-bold'}>
            {HEAD.map(([t, w], i) => (
              <span key={t} className="flex items-center justify-center border-b border-r border-[#2f6390]">
                {t[0] === '+' && <span className="mb-[4px] mr-[4px] flex h-[21px] w-[21px] items-center justify-center border border-[#666] bg-white"><Plus className="size-[16px]" strokeWidth={4} /></span>}
                <F u={i === 0} c={w}>{t.replace('+', '')}</F>
              </span>
            ))}
          </div>
          {ROWS.map((r, i) => (
            <div key={i} className={GRID + ' h-[32.5px] border-[#2f6390] ' + (i % 2 ? 'border-b' : 'border-b-2')}>
              {r.map((v, j) => (
                <span key={j} className={'flex items-center justify-center border-r border-[#2f6390] ' + (v[0] === '(' ? 'text-[#f00]' : '')}>{v}</span>
              ))}
            </div>
          ))}
          <div className={GRID + ' h-[41px] border-t-[8px] border-[#2f6390] bg-white font-bold'}>
            {SUM.map((v, j) => <span key={j} className="flex items-center justify-center border-r border-[#2f6390]"><span className="scale-x-98">{v}</span></span>)}
          </div>
        </div>
      </div>
      <div className="mt-[24px] flex pl-[1150px] text-[18px]">
        <F c="w-[461px]">Copyright © 2007-2019 Traders.One. All rights reserved</F>
        <F c="ml-[364px] w-[191px] text-[#ed1c24]">gde Payout   u chela?</F>
      </div>
      <F c="ml-[1660px] mt-[26px] w-[163px] text-[18px] text-[#ed1c24]">Gde ($136.31) ???</F>
    </div>
  );
}

function Firefox() {
  return (
    <div className="absolute left-[36px] top-[53px] flex h-[1911px] w-[2761px] flex-col overflow-hidden border border-[#1883d7] bg-white">
      <TabStrip />
      <UrlBar />
      <Page />
    </div>
  );
}

function RedInk() {
  return (
    <>
      <div className="absolute left-[2872px] top-[542px] flex h-[151px] flex-col overflow-hidden text-[36px] leading-[54px] text-[#ed1c24]">
        <F c="w-[137px]">Vot ego</F><F c="w-[240px]">pribliziteljnuy</F><F c="w-[123px]">Payout</F>
      </div>
      <svg viewBox="0 0 3840 2160" className="absolute left-0 top-0 h-[2160px] w-[3840px]" fill="none" stroke="#ed1c24" strokeWidth="3.500" strokeLinecap="round" strokeLinejoin="round">
        <path d="M2987 728L2958 750 2947 765 2940 782 2930 797 2918 824 2905 860 2903 873 2888 907 2883 925 2868 960 2864 985 2857 1008 2846 1036 2823 1090 2815 1117 2806 1132 2797 1155 2789 1175 2774 1204 2763 1231 2754 1244 2736 1277Q2734 1280 2730 1280L2718 1280 2716 1275 2714 1260M2709 1278L2712 1262Q2714 1257 2724 1257L2726 1260" />
        <path d="M1776 1295L1773 1285Q1774 1279 1782 1279L1793 1280 1800 1285Q1810 1287 1810 1292L1808 1300 1793 1304 1791 1313 1794 1319" />
        <path d="M2754 1409h1M1801 1341v1" strokeWidth="2" />
      </svg>
    </>
  );
}

/* ---------- Taskbar ---------- */

const TASK: React.ReactNode[] = [
  <FaEdge className="size-full text-[#0078d7]" />,
  <svg viewBox="0 0 24 24" className="size-full"><path d="M1 2h9l2 3h11v18H1z" fill="#f7cf62" /><path d="M1 7h22v15H1z" fill="#ffe292" /><path d="M5 22v-9h14v9h-4v-5H9v5z" fill="#3f9bdc" /></svg>,
  <svg viewBox="0 0 24 24" className="size-full"><path d="M2 7h20v17H2z" fill="#fff" /><path d="M8 9V4a4 4 0 0 1 8 0v5" fill="none" stroke="#fff" strokeWidth="1.500" /><path d="M7 10h4.500v5H7z" fill="#f25022" /><path d="M12.500 10H17v5h-4.500z" fill="#7fba00" /><path d="M7 16h4.500v5H7z" fill="#00a4ef" /><path d="M12.500 16H17v5h-4.500z" fill="#ffb900" /></svg>,
  <svg viewBox="0 0 24 24" className="size-full"><path d="M1 10l11-8 11 8v12H1z" fill="#fff" /><path d="M4 10h16l-8 8-3-4z" fill="#0a0e14" /></svg>,
  <svg viewBox="0 0 24 24" className="size-full"><path d="M2 14C1 7 9 3 15 5c6 2 6 14 0 17-4 1-2-5-6-4-3 0-6 1-7-4z" fill="#cfe3f3" /><circle cx="7" cy="11" r="2.200" fill="#e34" /><circle cx="13" cy="8" r="2.200" fill="#f5b400" /><circle cx="17.500" cy="13" r="2.200" fill="#4a4" /><circle cx="15" cy="18" r="2.200" fill="#36c" /><path d="M20 0l3 2-8 11-2-1z" fill="#c58b4a" /></svg>,
  <span className="flex size-full items-center justify-center rounded-full bg-[#2a3f9e]"><FaFirefox className="size-full text-[#ff8a16]" /></span>,
  <svg viewBox="0 0 24 24" className="size-full"><path d="M8 1h14v21H8z" fill="#1066b5" /><path d="M8 1h14v7H8z" fill="#32a9e7" /><path d="M8 14l14-5v13H8z" fill="#50d0f5" opacity=".7" /><path d="M0 6h13v12H0z" fill="#0a56a5" /><circle cx="6.500" cy="12" r="3.300" fill="none" stroke="#fff" strokeWidth="1.800" /></svg>,
  <svg viewBox="0 0 24 24" className="size-full"><path d="M7 3l13-1-2 19-16 1z" fill="#7db9c4" /><path d="M8 3l11-1-2 17-13 1z" fill="#b8e0e6" /><path d="M6 10l12-1M5.500 13l12-1M5 16l12-1" stroke="#4f8f9c" /></svg>,
  <span className="flex size-full items-center justify-center rounded-full bg-[#00a4e8] font-bold text-white"><FaSkype className="size-full text-[#00a4e8] [background:radial-gradient(#fff_52%,transparent_54%)]" /></span>,
  <svg viewBox="0 0 24 24" className="size-full"><path d="M4 1h13l4 4v18H4z" fill="#fff" stroke="#e2231a" strokeWidth="1.600" /><path d="M7 16c4-2 5-7 5-11 0 4 3 7 7 8-4-1-8 0-12 3z" fill="none" stroke="#e2231a" strokeWidth="1.400" /><path d="M8 20h9" stroke="#333" strokeWidth="2" strokeDasharray="2.500 .8" /></svg>,
  <svg viewBox="0 0 24 24" className="size-full"><circle cx="12" cy="12" r="11.500" fill="#d9dcd8" /><path d="M2 6c5 1 11 8 13 17C7 22 1 16 2 6z" fill="#5aa50a" /><path d="M6 2c7 3 12 11 12 20l-3 1C13 14 9 8 3 5z" fill="#fff" /><path d="M18 4c2 3 2 6 0 10-2-4-2-7 0-10z" fill="#888" /></svg>,
  <span className="flex size-full items-center justify-center rounded-full border-2 border-[#d85ab8] bg-white"><svg viewBox="0 0 24 24" className="size-[75%]"><path d="M9 19V5l10-2v13" fill="none" stroke="#c847c4" strokeWidth="2" /><circle cx="7" cy="19" r="3" fill="#5b62f0" /><circle cx="17" cy="16" r="3" fill="#f0486e" /></svg></span>,
  <svg viewBox="0 0 24 24" className="size-full"><path d="M6 1h17v22H6z" fill="#185c37" /><path d="M6 1h8v8H6zM6 9h8v6H6z" fill="#21a366" /><path d="M14 1h9v8h-9z" fill="#33c481" /><path d="M14 9h9v6h-9z" fill="#107c41" /><path d="M0 6h13v12H0z" fill="#107c41" /><path d="M4 9l5 6M9 9l-5 6" stroke="#fff" strokeWidth="1.800" /></svg>,
  <svg viewBox="0 0 24 24" className="size-full"><path d="M1 3h22v18H1z" fill="#000" stroke="#888" strokeWidth="1.400" /><path d="M4 6h2M7 6h1M9 6l2 3M13 9h3" stroke="#ddd" /></svg>,
  <svg viewBox="0 0 24 24" className="size-full"><path d="M4 0h16v24H4z" fill="#fff" /><path d="M6 2h12v4H6z" fill="#111" /><path d="M7 10h10M7 15h10M7 20h10" stroke="#111" strokeWidth="2.400" strokeDasharray="2.200 1.700" /></svg>,
];

function Taskbar({ big }: { big: boolean }) {
  const small = big ? 'size-[30px]' : 'size-[20px]';
  const sys = 'flex shrink-0 items-center justify-center ' + (big ? 'w-[72px]' : 'w-[48px]');
  const slot = 'flex h-full shrink-0 flex-col items-center justify-between ';
  return (
    <div className={'absolute left-0 flex items-center bg-[#060b12] text-white ' + (big ? 'top-[2100px] h-[60px] w-[3840px]' : 'top-[1400px] h-[40px] w-[2560px]')}>
      <span className={sys}><FaWindows className={small + ' scale-90'} /></span>
      <span className={sys}><Search className={small + ' -scale-x-100'} strokeWidth={1.5} /></span>
      <span className={sys}><svg viewBox="0 0 24 24" className={small}><path d="M2 7h14v10H2zM2 1v3h14V1M2 23v-3h14v3M21 1v22" fill="none" stroke="#fff" strokeWidth="1.500" /><path d="M19.500 8h3v4h-3z" fill="#fff" /></svg></span>
      {TASK.map((ic, i) => (
        <span key={i} className={slot + (big ? 'w-[75px] ' : 'w-[49px] ') + (i === 0 ? (big ? 'ml-[3px] ' : 'ml-[2px] ') : '') + (i === 5 ? 'bg-[#3a3c40]' : '')}>
          <span className={big ? 'mt-[12px] size-[36px]' : 'mt-[7px] size-[25px]'}>{ic}</span>
          {i !== 2 && i !== 3 && <span className={'bg-[#76b9ed] ' + (big ? 'h-[3px] w-[62px]' : 'h-[3px] w-[40px]')} />}
        </span>
      ))}
      {big ? (
        <div className="ml-auto flex h-full items-center">
          <Users className="size-[28px]" strokeWidth={1.4} />
          <ChevronUp className="ml-[33px] size-[24px]" strokeWidth={1.5} />
          <Monitor className="ml-[12px] size-[24px]" strokeWidth={1.4} />
          <Volume2 className="ml-[12px] size-[24px]" strokeWidth={1.4} />
          <F c="ml-[16px] w-[34px] text-[18px]">ENG</F>
          <span className="ml-[25px] flex flex-col gap-[8px] text-[18px]"><F c="w-[74px]">11:26 PM</F><F c="w-[74px]">7/5/2019</F></span>
          <span className="relative ml-[32px] mr-[20px] h-[34px] w-[36px]">
            <svg viewBox="0 0 24 24" className="h-[26px] w-[26px]"><path d="M1 1h22v17h-7l-4 5v-5H1z" fill="#fff" /><path d="M5 6h14M5 10h14M5 14h8" stroke="#111" strokeWidth="1.500" /></svg>
            <span className="absolute left-[11px] top-[11px] flex size-[24px] items-center justify-center rounded-full border border-[#777] bg-[#2b2d33] text-[17px]">8</span>
          </span>
          <span className="mr-[6px] h-full w-px bg-[#888]" />
        </div>
      ) : (
        <span className="ml-auto mr-[9px] flex flex-col gap-[6px] text-[12px]"><F c="w-[47px]">11:26 PM</F><F c="w-[46px]">7/5/2019</F></span>
      )}
    </div>
  );
}

/* ---------- Right monitor: Notepad ---------- */

const NOTE1 = `alwaysonlnx.islb.one 138.201.52.116 mask: 255.255.255.192

# mu sdelali pcs cluster setup --name agdbcluster
AlwaysOn group Name will be "alwaysonlnx",
Node name 1 (Primary): 138.201.52.89  agdb1.islb.one  alwaysonlnx alwaysonlnx.islb.one 138.201.52.116  /netmask
255.255.255.192  broadcast 138.201.52.127/
Node name 1 (Secondary): 138.201.84.98  agdb2.islb.one  agdb2 /netmask 255.255.255.192  broadcast 138.201.84.127/

pcs cluster status
pcs status -full
pcs resource show
pcs config show

$ pcs status
$ pcs status cluster
$ pcs status corosync
$ pcs cluster stop [nodename]
$ pcs cluster start --all
$ pcs cluster standby nodename

$ rm -f /var/lib/pacemaker/cib/*
$ systemctl stop pacemaker
$ systemctl stop corosync
$ systemctl start corosync
$ systemctl start pacemaker

pic diagrams https://docs.microsoft.com/en-us/sql/linux/sql-server-linux-availability-group-ha?view=sql-server-2017

SELECT * FROM sys.database_principals WHERE TYPE='S'
EXEC sp_readerrorlog 0, 1, 'Login failed'
xp_readerrorlog 0,1,”AuditLoginTest1? – Replace AuditLoginTest1 with your login name you want to search.

https://stackoverflow.com/questions/406294/left-join-vs-left-outer-join-in-sql-server?rq=1

this will be in wizard as Add Replica --> Endpoints TCP://agdb1.islb.one:5022 our name is Endpoint_AvailabilityGroup
In the Listener tab

[trading3_eu]
to-ax-eu001;password=MsGeUcU&abmQR8$6   dbOwner --for ilab traders


-----------------------------
File and Directory Locations https://redhatlinux.guru/2018/05/22/pacemaker-cheat-sheet/
Location        Description
/var/lib/pacemaker/cib/cib.xml  Primary cluster configuration file
/var/log/cluster/corosync.log   Primary cluster log file
/usr/lib/ocf/resource.d/heartbeat/      Directory where resource scripts are located
Check Cluster Status`;

const NOTE2 = `pcs constraint colocation add AVGListener alwaysonlnx-master INFINITY with-rsc-role=Master
#Configure the order in which the cluster resources should start/stop
pcs constraint order promote alwaysonlnx-master then start AVGListener
pcs status

А именно - exitreason='[findif] failed', - find if failed - он не смог найти интерфейс на
будет работать...
поумолчению он ищет eth0 но у нас совсем другие, поэтому нужно  указать явно  nic=enp0s31f6
да и маска 26
Финальная команда чтоб исправить была
pcs resource update AVGListener ocf:heartbeat:IPaddr2 ip=138.201.52.116 cidr_netmask=26 nic

pcs resource delete AVGListener`;

const mono = "whitespace-pre font-['DejaVu_Sans_Mono',monospace] text-[13.29px] leading-[18px] text-black";

function Notepads() {
  return (
    <>
      <div className="absolute left-[358px] top-[900px] flex h-[373px] w-[740px] flex-col justify-end overflow-hidden bg-white pb-[27px] pl-[4px] shadow-[0_4px_14px_rgba(0,0,0,0.5)]">
        <pre className={mono}>{NOTE2}</pre>
      </div>
      <div className="absolute left-[87px] top-[72px] flex h-[946px] w-[1010px] flex-col border border-[#555] bg-white shadow-[0_4px_14px_rgba(0,0,0,0.5)]">
        <div className="flex h-[29px] shrink-0 items-center pl-[8px] text-[13px] text-[#999]">
          <span className="size-[16px]">{TASK[7]}</span>
          <F c="ml-[5px] w-[217px]">alwaysondb.islb.one-logins.txt - Notepad</F>
          <Controls c="ml-auto" slot="w-[46px]" g="size-[10px]" />
        </div>
        <div className="flex h-[20px] shrink-0 items-center border-b-2 border-[#eee] pl-[6px] text-[13px] text-[#666]">
          <F c="w-[18px]">File</F><F c="ml-[14px] w-[20px]">Edit</F><F c="ml-[14px] w-[38px]">Format</F><F c="ml-[14px] w-[25px]">View</F><F c="ml-[14px] w-[25px]">Help</F>
        </div>
        <pre className={mono + ' mt-[18px] pl-[4px]'}>{NOTE1}</pre>
      </div>
    </>
  );
}

/* ---------- Right monitor: Acrobat ---------- */

const docs: [string, string, string][] = [
  ['w-[95px]', 'w-[58px]', 'tidrls7.p...'], ['w-[110px]', 'w-[57px]', 'tidrem3...'], ['w-[110px]', 'w-[58px]', '3.5-kW ...'],
  ['w-[110px]', 'w-[51px]', 'All SiC ...'], ['w-[110px]', 'w-[56px]', 'Hybrid_...'], ['w-[110px]', 'w-[59px]', 'Infineon...'],
];

const ToolDoc = ({ k, m }: { k: string; m: string }) => (
  <svg viewBox="0 0 24 24" className="size-[24px]" fill="none" stroke={k} strokeWidth="1.800"><path d="M2 2h13l4 4v6M2 2v18h8" /><path d="M5 15c3-2 4-5 4-8 1 4 3 5 6 5" strokeWidth="1.200" /><circle cx="18" cy="18" r="5.500" fill={k} /><path d={m} stroke="#fff" /></svg>
);
const TOOLS: [React.ReactNode, string, string, boolean][] = [
  [<ToolDoc k="#e34850" m="M15 18h6M18 15v6" />, 'Create PDF', 'w-[76px]', true],
  [<svg viewBox="0 0 24 24" className="size-[24px]" fill="none" stroke="#d83790" strokeWidth="1.800"><path d="M1 2h22v7H1zM1 13h10v9H1zM14 14h9M14 18h9M14 22h9" /></svg>, 'Edit PDF', 'w-[57px]', false],
  [<svg viewBox="0 0 24 24" className="size-[22px]"><path d="M1 2h22v14H14l-5 6v-6H1z" fill="#dfbf25" /><path d="M6 7h12M6 11h9" stroke="#fff" strokeWidth="1.600" /></svg>, 'Comment', 'w-[69px]', false],
  [<svg viewBox="0 0 24 24" className="size-[26px]"><path d="M14 1h6l3 3v13h-9z" fill="#6767ec" /><path d="M1 2h9l3 3v12H1z" fill="#eef" stroke="#6767ec" strokeWidth="1.800" /><path d="M12 11v10M8 18l4 4 4-4" stroke="#6767ec" strokeWidth="2.200" fill="none" /></svg>, 'Combine Files', 'w-[98px]', true],
  [<svg viewBox="0 0 24 24" className="size-[24px]" fill="none" stroke="#7bc943" strokeWidth="2"><path d="M14 2h8v20h-8z" fill="#e2f4d3" /><path d="M2 8v14h8V8z" strokeDasharray="3 2" /><path d="M9 2L4 6M2 2v5h6" /></svg>, 'Organize Pages', 'w-[106px]', true],
  [<Highlighter className="size-[24px]" color="#d83790" />, 'Redact', 'w-[47px]', false],
  [<Shield className="size-[24px]" color="#6767ec" fill="#e4e4fb" />, 'Protect', 'w-[49px]', false],
  [<svg viewBox="0 0 24 24" className="size-[24px]" fill="none" stroke="#e34850" strokeWidth="1.800"><path d="M4 1h13l4 4v12H4z" fill="#fbe0e1" /><path d="M8 13c3-2 4-5 4-8 1 4 3 5 6 5" strokeWidth="1.200" /><path d="M4 21h17" strokeDasharray="5 2" /></svg>, 'Optimize PDF', 'w-[95px]', false],
  [<Pencil className="size-[24px]" color="#9256d9" fill="#eadcfb" />, 'Fill & Sign', 'w-[72px]', false],
  [<svg viewBox="0 0 24 24" className="size-[24px]"><path d="M2 2h10l6 6v12H2z" fill="#faf3c4" stroke="#d7bd00" strokeWidth="1.800" /><path d="M12 12h12v7h-5l-3 3v-3h-4z" fill="#d7bd00" /></svg>, 'Send for Review', 'w-[112px]', false],
  [<Wrench className="size-[24px]" color="#6e6e6e" fill="#6e6e6e" />, 'More Tools', 'w-[75px]', false],
];

function Line({ h, l, lw, v, vw, sel }: { h: string; l: string; lw: string; v?: string; vw?: string; sel?: boolean }) {
  return (
    <div className={'flex items-center justify-between ' + h}>
      <span className={sel ? 'bg-[#9db8d2] py-[2px]' : ''}><F c={lw}>{l}</F></span>
      {v && <span className={sel ? 'bg-[#9db8d2] py-[2px] text-[#c0392b]' : 'text-[#f00]'}><F c={"font-['Liberation_Serif'] text-[22px] " + vw}>{v}</F></span>}
    </div>
  );
}

function Acrobat() {
  const t = 'flex shrink-0 items-center justify-center ';
  const i = 'size-[23px]';
  const tl = 'flex w-[44px] shrink-0 justify-center';
  return (
    <div className="absolute left-[1078px] top-[29px] flex h-[1267px] w-[1164px] flex-col border border-[#444] bg-white text-[#444] shadow-[0_4px_16px_rgba(0,0,0,0.6)]">
      <div className="flex h-[28px] shrink-0 items-center pl-[9px] text-[13px] text-[#999]">
        <span className="size-[15px]">{TASK[9]}</span>
        <F c="ml-[5px] w-[343px] text-[14px]">IQINTENSE-settlement-May.2019.pdf - Adobe Acrobat Reader DC</F>
        <Controls c="ml-auto" slot="w-[46px]" g="size-[10px]" />
      </div>
      <div className="flex h-[21px] shrink-0 items-center bg-[#fafafa] pl-[6px] text-[13px] text-black">
        <F c="w-[18px]">File</F><F c="ml-[14px] w-[20px]">Edit</F><F c="ml-[14px] w-[25px]">View</F><F c="ml-[14px] w-[44px]">Window</F><F c="ml-[14px] w-[25px]">Help</F>
      </div>
      <div className="flex h-[37px] shrink-0 border-y border-[#c8c8c8] bg-[#e9e9e9] text-[14px]">
        <span className="flex w-[151px] shrink-0 items-center border-r border-[#c8c8c8] pl-[15px] text-[16px]"><F c="w-[42px]">Home</F><F c="ml-[30px] w-[34px]">Tools</F></span>
        {docs.map(([w, tw, s]) => <span key={s} className={t + 'border-r border-[#c8c8c8] ' + w}><F c={tw}>{s}</F></span>)}
        <span className={t + '-mb-px w-[110px] border-r border-[#c8c8c8] bg-[#fbfbfb] pl-[14px]'}><F c="w-[52px]">IQINTE...</F><X className="ml-[12px] size-[11px]" strokeWidth={3} /></span>
        <ChevronLeft className="ml-[13px] mt-[8px] size-[18px]" /><ChevronRight className="ml-[6px] mt-[8px] size-[18px]" />
        <span className="ml-[30px] mt-[7px] flex size-[21px] items-center justify-center rounded-full border-2 border-[#666] text-[13px] font-bold">?</span>
        <Bell className="ml-[21px] mt-[8px] size-[19px] text-[#a0a0a0]" fill="#a0a0a0" />
        <F c="ml-[31px] mt-[9px] w-[55px] text-[16px] font-semibold">Sign In</F>
      </div>
      <div className="flex h-[46px] shrink-0 items-center border-b border-[#c8c8c8] bg-[#fbfbfb] pl-[2px] text-[13px] text-[#666]">
        <span className={tl}><Save className={i + ' text-[#aaa]'} /></span><span className={tl}><CloudUpload className={i} /></span><span className={tl}><Printer className={i} /></span><span className={tl}><Mail className={i} /></span><span className={tl}><Search className={i} /></span>
        <span className={tl + ' ml-[32px]'}><CircleArrowUp className={i + ' text-[#aaa]'} /></span><span className={tl}><CircleArrowDown className={i + ' text-[#aaa]'} /></span>
        <span className="ml-[9px] flex h-[26px] w-[28px] items-center justify-center border-b border-[#bbb]">1</span><span className="ml-[7px]">/  1</span>
        <span className="ml-[20px] h-[30px] w-px bg-[#bbb]" />
        <span className={tl + ' ml-[10px]'}><MousePointer2 className="size-[18px] text-[#1a6fd0]" fill="#1a6fd0" /></span><span className={tl}><Hand className={i} /></span><span className={tl}><CircleMinus className={i} /></span><span className={tl}><CirclePlus className={i} /></span>
        <span className="ml-[9px] flex h-[26px] w-[70px] items-center justify-between border-b border-[#bbb] px-[8px]"><F c="w-[31px]">96.8%</F><span className="text-[10px]">▼</span></span>
        <svg viewBox="0 0 24 24" className="ml-[22px] size-[24px]" fill="none" stroke="#1a6fd0" strokeWidth="2"><path d="M2 1v8h17V1M2 23V13h12l5 5v5M5 18h9M7 16l-2 2 2 2M12 16l2 2-2 2" /></svg>
        <span className="ml-[4px] text-[9px] text-[#1a6fd0]">▼</span>
        <Keyboard className="ml-[21px] size-[24px]" />
        <span className="ml-[19px] h-[30px] w-px bg-[#bbb]" />
        <MessageSquareText className="ml-[22px] size-[21px]" /><Highlighter className="ml-[22px] size-[23px]" />
        <span className="ml-auto mr-[14px] flex h-[31px] w-[100px] items-center justify-center rounded-full bg-[#2680eb] text-[15px] font-semibold text-white"><Upload className="mr-[9px] size-[17px]" /><F c="w-[42px]">Share</F></span>
      </div>
      <div className="flex min-h-0 flex-1">
        <div className="w-[18px] shrink-0 bg-[#e8e8e8]" />
        <div className="flex w-[880px] shrink-0 flex-col bg-white pl-[76px] pr-[216px] font-['Liberation_Sans'] text-[20px] text-black">
          <div className="h-[90px] shrink-0" />
          <Line h="h-[51px]" l="Group: IQINTENSE" lw="w-[180px]" />
          <Line h="h-[51px]" l="From MAy 01 to MAy 31,2019" lw="w-[275px]" />
          <Line h="h-[57px]" l="Date:Jun 21, 2019" lw="w-[169px]" />
          <div className="flex h-[80px] items-center justify-center pl-[4px] text-[26px]"><F c="w-[224px] [-webkit-text-stroke:0.4px_#000]">Monthly Statement</F></div>
          <div className="-mt-[22px] flex h-[36px] items-center justify-between text-[23px] [-webkit-text-stroke:0.5px_#000]"><F c="w-[120px]">Description</F><F c="-mr-[4px] w-[84px]">Amount</F></div>
          <Line h="h-[30px]" l="Net" lw="w-[32px]" v="(927. 67)" vw="w-[87px]" />
          <div className="h-[34px] shrink-0" />
          <Line h="h-[30px]" l="Software Fees" lw="w-[133px]" v="(145. 00)" vw="w-[87px]" />
          <Line h="h-[30px]" l="Data Fees" lw="w-[95px]" v="(28. 13)" vw="w-[75px]" />
          <div className="h-[30px] shrink-0" />
          <Line h="h-[30px]" l="Net Realized" lw="w-[118px]" v="(1100. 80)" vw="w-[99px]" />
          <div className="h-[27px] shrink-0" />
          <Line h="h-[30px]" l="Net Profit" lw="w-[89px]" v="(1100. 80)" vw="w-[99px]" />
          <div className="h-[15px] shrink-0" />
          <Line h="h-[30px]" l="Net Payout" lw="w-[103px]" v="(1100. 80)" vw="w-[99px]" />
          <div className="h-[57px] shrink-0" />
          <Line h="h-[30px]" l="Total Distribution" lw="w-[156px]" v="(1100. 80)" vw="w-[99px]" sel />
          <div className="flex h-[34px] items-center justify-center text-[23px] [-webkit-text-stroke:0.4px_#000]"><F c="w-[240px]">Thank you very much !</F></div>
          <div className="h-[32px] shrink-0" />
          <div className="flex h-[36px] items-center"><F c="w-[272px]">Initial Capital Investment :</F><F c="ml-[56px] w-[98px] font-['Liberation_Serif']">15098. 19</F></div>
          <Line h="h-[33px]" l="Receiving currency  :" lw="w-[213px]" />
          <Line h="h-[33px]" l="Bank name:" lw="w-[106px]" />
          <Line h="h-[33px]" l="Bank Address:" lw="w-[130px]" />
          <Line h="h-[33px]" l="Account name  :" lw="w-[155px]" />
          <Line h="h-[33px]" l="Account Number  :" lw="w-[175px]" />
          <Line h="h-[33px]" l="SW CODE:" lw="w-[98px]" />
        </div>
        <div className="flex w-[17px] shrink-0 flex-col items-center border-x border-[#ccc] bg-[#f0f0f0]">
          <ChevronUp className="my-[7px] size-[12px]" strokeWidth={3} />
          <span className="h-[984px] w-full bg-[#cdcdcd]" />
          <ChevronDown className="mb-[6px] mt-auto size-[12px]" strokeWidth={3} />
        </div>
        <div className="flex w-[18px] shrink-0 items-center justify-center border-r border-[#ccc] bg-[#e8e8e8] text-[11px]">▶</div>
        <div className="flex flex-1 flex-col bg-[#fafafa] px-[15px] text-[13px]">
          <span className="mt-[16px] flex h-[34px] shrink-0 items-center border border-[#c4c4c4] bg-white pl-[13px] text-[#999]"><F c="w-[74px]">Search tools</F></span>
          <div className="-mx-[15px] flex h-[55px] shrink-0 items-center border-b border-[#ccc] pl-[26px] pt-[14px] text-[16px]"><ToolDoc k="#16969b" m="M15 18h6M19 16l2 2-2 2" /><F c="ml-[11px] w-[75px]">Export PDF</F><ChevronUp className="ml-[57px] size-[15px]" strokeWidth={3} /></div>
          <div className="mt-[21px] flex h-[18px] shrink-0 items-center justify-between"><F c="w-[123px] text-[14px] font-bold">Adobe Export PDF</F><Copy className="size-[16px] text-[#999]" /></div>
          <div className="mt-[10px] leading-[17px]"><F c="w-[166px]">Convert PDF Files to Word or</F></div>
          <div className="leading-[17px]"><F c="w-[70px]">Excel Online</F></div>
          <F c="mt-[21px] w-[83px] text-[#1473c6]">Select PDF File</F>
          <span className="mt-[10px] flex h-[30px] shrink-0 items-center justify-between rounded-[3px] border border-[#d0d0d0] px-[9px]"><F c="w-[136px]">IQINTENSE-...y.2019.pdf</F><X className="size-[15px]" /></span>
          <F c="mt-[20px] w-[60px]">Convert to</F>
          <span className="mt-[10px] flex h-[29px] shrink-0 items-center justify-between rounded-[3px] border border-[#d0d0d0] px-[9px]"><F c="w-[136px]">Microsoft Word (*.docx)</F><ChevronDown className="size-[15px]" /></span>
          <F c="mt-[17px] w-[122px]">Document Language:</F>
          <span className="mt-[8px] flex"><F c="w-[73px]">English (U.S.)</F><F c="ml-[8px] w-[43px] text-[#1473c6]">Change</F></span>
          <span className="mt-[62px] flex h-[31px] shrink-0 items-center justify-center rounded-full bg-[#2680eb] text-[15px] text-white"><F c="w-[52px]">Convert</F></span>
          <div className="-mx-[15px] mt-[22px] flex flex-col border-t border-[#ccc] pl-[25px] pt-[2px] text-[16px]">
            {TOOLS.map(([icon, s, w, chev]) => (
              <div key={s} className="flex h-[45.5px] items-center"><span className="flex w-[26px] justify-center">{icon}</span><F c={'ml-[9px] ' + w}>{s}</F>{chev && <ChevronDown className="ml-auto mr-[22px] size-[15px]" strokeWidth={3} />}</div>
            ))}
          </div>
          <div className="mt-[32px] flex flex-col items-center border-t border-[#ccc] pt-[21px]">
            <F c="w-[138px] font-bold">Convert and edit PDFs</F><F c="mt-[4px] w-[127px] font-bold">with Acrobat Pro DC</F><F c="mt-[10px] w-[74px] text-[#1473c6]">Start Free Trial</F>
          </div>
        </div>
      </div>
    </div>
  );
}

function DeskFile({ pos, label, w }: { pos: string; label: string; w: string }) {
  return (
    <div className={'absolute flex w-[80px] flex-col items-center text-[13px] text-white ' + pos}>
      <span className="flex h-[45px] w-[34px] flex-col items-center justify-between bg-white px-[3px] py-[3px]">
        <span className="h-[17px] w-full bg-[repeating-linear-gradient(#dcc6ea_0_2px,#fff_2px_5px)]" />
        <span className="mb-[2px] h-[6px] w-[22px] bg-[repeating-linear-gradient(90deg,#222_0_2px,#999_2px_3px)]" />
      </span>
      <F c={'mt-[8px] ' + w}>{label}</F>
    </div>
  );
}

function RightMonitor() {
  return (
    <div className="absolute left-[3840px] top-0 h-[1440px] w-[2560px] overflow-hidden bg-[radial-gradient(ellipse_120px_60px_at_2260px_1025px,#0094e8,transparent),radial-gradient(ellipse_700px_500px_at_2500px_850px,#00488a,transparent),radial-gradient(ellipse_1500px_700px_at_1700px_900px,#002e5e,transparent),linear-gradient(90deg,#00122c,#001a3a)]">
      <DeskFile pos="left-[221px] top-[1183px]" label="IMG-27143..." w="w-[66px]" />
      <DeskFile pos="left-[221px] top-[1281px]" label="IMG-89c02..." w="w-[66px]" />
      <div className="absolute left-[1571px] top-[1297px] flex w-[80px] flex-col items-center text-[13px] text-white">
        <span className="size-[34px]">{TASK[12]}</span><F c="mt-[2px] w-[24px]">New</F><F c="mt-[2px] w-[62px]">Microsoft...</F>
      </div>
      <Notepads />
      <div className="absolute left-[2000px] top-[297px] flex h-[725px] w-[466px] flex-col bg-white text-[#999]">
        <div className="flex h-[45px] items-start border-b border-[#ccc] bg-[#f6f6f6]">
          <span className="mt-[12px] flex h-[23px] w-[376px] items-center rounded-[4px] border-2 border-[#d5d5d5] bg-white pl-[230px] text-[13px] font-semibold">Search</span>
          <Controls c="ml-[9px] mt-[5px]" slot="w-[26px]" g="size-[11px]" />
        </div>
        <div className="h-[20px] bg-[#efefef]" />
        <div className="h-[35px] border-b border-[#ddd]" />
      </div>
      <Acrobat />
      <Taskbar big={false} />
    </div>
  );
}

export default function App() {
  return (
    <div className="h-[1382px] w-[4096px] overflow-hidden bg-black">
      <div className="relative h-[2160px] w-[6400px] overflow-hidden bg-black font-['Open_Sans','Noto_Sans',sans-serif] leading-none [zoom:0.64]">
        <Corel />
        <div className="absolute left-[2600px] top-[76px] flex h-[100px] w-[346px] justify-end border border-[#aaa] bg-white text-[#888]"><Controls c="h-[44px]" /></div>
        <div className="absolute left-[2600px] top-[1300px] h-[529px] w-[1221px] border border-[#aaa] bg-white shadow-[0_8px_22px_rgba(0,0,0,0.3)]">
          <span className="absolute left-[900px] top-[410px] h-[90px] w-[217px] rounded-[14px] bg-[#f1f1f3]" />
          <span className="absolute left-[1138px] top-[424px] flex size-[60px] items-center justify-center rounded-full bg-[#f1f1f3] text-black"><Plus className="size-[36px]" strokeWidth={1.3} /></span>
        </div>
        <div className="absolute left-[65px] top-[1900px] flex h-[121px] w-[2400px] flex-col border-b-2 border-l border-[#777] bg-[#f2f2f2]">
          <div className="flex h-[88px] items-end border-b border-[#bbb]">
            <span className="h-full w-[346px] bg-[#e1e1e1]" />
            <span className="flex h-full flex-1 items-end bg-white pb-[9px] pl-[130px] text-[16px] text-[#666]"><F c="w-[705px]">Sorry for the late response  I spoke with rob at ETC   he is calling sterling,  We think it is a sterling issue</F><F c="ml-[32px] w-[375px]">If anything needs to be done from us he is going to be</F></span>
          </div>
          <span className="flex flex-1 items-center pl-[8px] text-[16px] text-[#444]"><F c="w-[185px]">Items: 4,164   Unread: 106</F></span>
        </div>
        <div className="absolute left-[1877px] top-[1500px] flex h-[550px] w-[1827px] items-end justify-between border border-[#aaa] bg-white pb-[2px] text-[16px] text-[#333] shadow-[0_8px_22px_rgba(0,0,0,0.3)]">
          <F c="mb-[8px] ml-[28px] w-[280px]">1 item      1 item selected  65.4 MB</F>
          <span className="flex items-center pr-[13px]"><i className="mr-[6px] h-[32px] w-[34px] border border-[#26a0da] bg-[#b8e0f2]" /><span className="flex h-[16px] w-[22px] flex-col border-2 border-[#aaa]"><i className="flex-1 bg-[#7cc4f4]" /><i className="flex-1 bg-[#2c7a4c]" /></span></span>
        </div>
        <div className="absolute left-[2600px] top-[1300px] h-[393px] w-[1221px] border border-[#aaa] bg-white shadow-[0_4px_12px_rgba(0,0,0,0.2)]">
          <span className="absolute left-[1139px] top-[288px] size-[60px] rounded-full bg-[#f1f1f3]" />
        </div>
        <div className="absolute left-[2600px] top-[1300px] h-[364px] w-[1114px] border border-[#aaa] bg-white shadow-[0_4px_12px_rgba(0,0,0,0.2)]" />
        <Skype />
        <Excel />
        <Calculator
          pos="left-[2776px] top-[449px]" value="-23.723" valueW="w-[355px]" keypad={false}
          entries={[
            ['450.737   -   474.46 =', 'w-[210px]', '-23.723', 'w-[120px]'], ['474.46   ×   0.95 =', 'w-[180px]', '450.737', 'w-[127px]'],
            ['1100.8 =', 'w-[85px]', '1,600', 'w-[84px]'], ['1100.8 =', 'w-[85px]', '499.2', 'w-[88px]'],
            ['1100.8 =', 'w-[85px]', '499.2', 'w-[88px]'], ['-   24.17 =', 'w-[100px]', '575.83', 'w-[106px]'],
          ]}
        />
        <Calculator
          pos="left-[2646px] top-[839px]" value="5,361.873" valueW="w-[445px]" keypad
          entries={[['5338.15   -   -23.723 =', 'w-[219px]', '5,361.873', 'w-[149px]'], ['5000   +   474.46   -   136.31 =', 'w-[298px]', '5,338.15', 'w-[130px]']]}
        />
        <div className="absolute left-[36px] top-[53px] h-[1911px] w-[2761px] shadow-[0_8px_28px_rgba(0,0,0,0.45)]" />
        <Firefox />
        <RedInk />
        <div className="absolute left-0 top-0 w-[3840px]"><Taskbar big /></div>
        <RightMonitor />
      </div>
    </div>
  );
}
